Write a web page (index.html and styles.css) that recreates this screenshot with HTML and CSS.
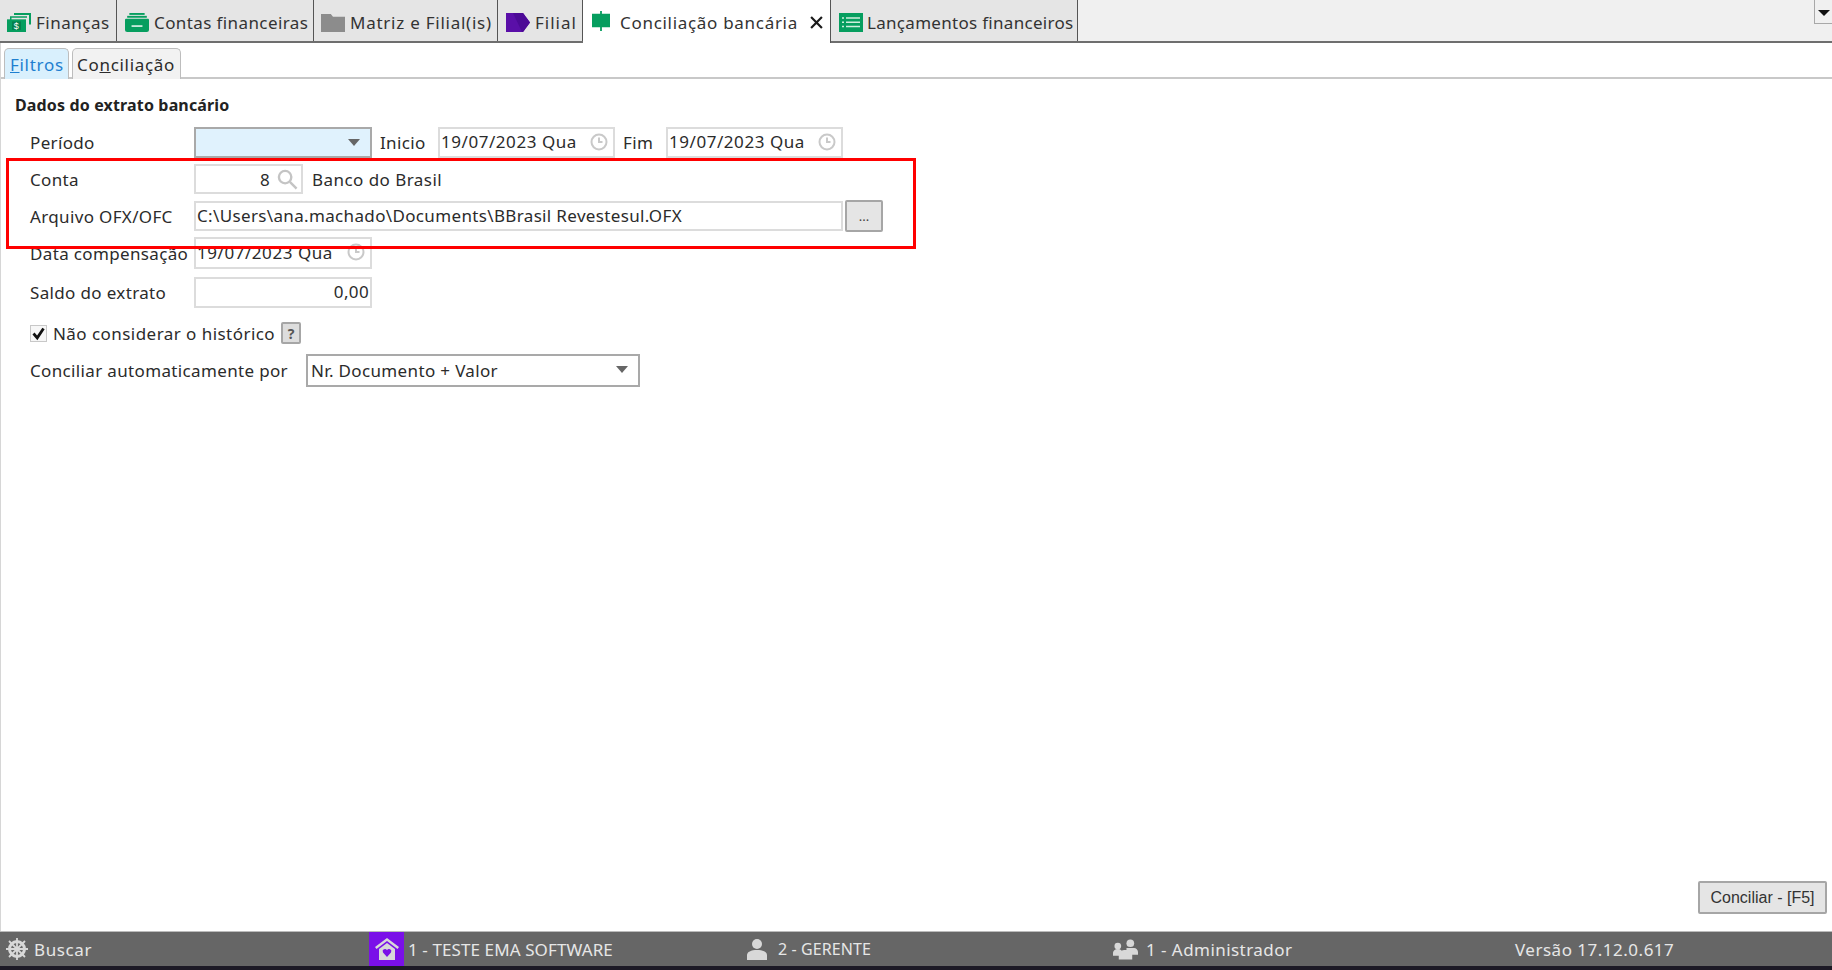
FILE: index.html
```html
<!DOCTYPE html>
<html lang="pt-BR">
<head>
    <meta charset="UTF-8">
    <title>Conciliação bancária</title>
    <link rel="stylesheet" href="styles.css">
</head>
<body>
<div class="app">
    <div class="tabs">
        <div class="tab tab-financas">
            <svg class="tab-icon" viewBox="0 0 24 18" preserveAspectRatio="none"><path class="green" d="M7 0h17v11h-2V2H7z"/><path class="green" d="M3 3h17v1.500H4.500V14H3z"/><rect class="green" x="0" y="6" width="19" height="12"/><rect class="green-dark" x="5" y="8" width="9" height="8"/><text x="9.500" y="15.500" class="dollar">$</text></svg>
            <span>Finanças</span>
        </div>
        <div class="tab tab-contas">
            <svg class="tab-icon" viewBox="0 0 22 20" preserveAspectRatio="none"><path class="green" d="M4 0h14v2H4z"/><path class="green" d="M2 3h18v2H2z"/><path class="green" d="M1 6h20a1 1 0 0 1 1 1v11a2 2 0 0 1-2 2H2a2 2 0 0 1-2-2V7a1 1 0 0 1 1-1z"/><path d="M6 13h10v1.500H6z" fill="#fff"/></svg>
            <span>Contas financeiras</span>
        </div>
        <div class="tab tab-matriz">
            <svg class="tab-icon" viewBox="0 0 22 20" preserveAspectRatio="none"><path d="M0 1h9l2 3h11v16H0z" fill="#8c8c8c"/></svg>
            <span>Matriz e Filial(is)</span>
        </div>
        <div class="tab tab-filial">
            <svg class="tab-icon" viewBox="0 0 24 18" preserveAspectRatio="none"><path d="M0 0h17l7 9-7 9H0z" fill="#5a0fa8"/><path d="M7 0h10l7 9-7 9h-1z" fill="#4c0a96"/></svg>
            <span>Filial</span>
        </div>
        <div class="tab tab-active">
            <svg class="tab-icon icon-candle" viewBox="0 0 20 22"><path class="green" d="M9 0h2v3h9v15h-9v4H9v-4H0V3h9z"/></svg>
            <span class="tab-active-label">Conciliação bancária</span>
            <svg class="tab-close" viewBox="0 0 12 12"><path d="M1 1l10 10M11 1L1 11" stroke="#1a1a1a" stroke-width="2" fill="none"/></svg>
        </div>
        <div class="tab tab-lanc">
            <svg class="tab-icon" viewBox="0 0 24 18" preserveAspectRatio="none"><rect class="green" width="24" height="18"/><path d="M7 4h14v1.500H7zM7 8h14v1.500H7zM7 12h14v1.500H7zM3 4h2v1.500H3zM3 8h2v1.500H3zM3 12h2v1.500H3z" fill="#cfeedd"/></svg>
            <span>Lançamentos financeiros</span>
        </div>
        <button class="tabs-menu"><span class="caret-black"></span></button>
    </div>

    <div class="main">
        <div class="subtabs">
            <div class="subtab subtab-active"><u>F</u>iltros</div>
            <div class="subtab subtab-conc">Co<u>n</u>ciliação</div>
        </div>

        <div class="form">
            <h3 class="form-title">Dados do extrato bancário</h3>

            <div class="row row-periodo">
                <label class="lbl">Período</label>
                <div class="field select select-blue"><span class="caret"></span></div>
                <label class="lbl-inline lbl-inicio">Inicio</label>
                <div class="field date">19/07/2023 Qua
                    <svg class="clock" viewBox="0 0 18 18"><circle cx="9" cy="9" r="7.500"/><path d="M9 4.500V9h3.500"/></svg>
                </div>
                <label class="lbl-inline lbl-fim">Fim</label>
                <div class="field date">19/07/2023 Qua
                    <svg class="clock" viewBox="0 0 18 18"><circle cx="9" cy="9" r="7.500"/><path d="M9 4.500V9h3.500"/></svg>
                </div>
            </div>

            <div class="row row-conta">
                <label class="lbl">Conta</label>
                <div class="field conta">8
                    <svg class="search" viewBox="0 0 22 22"><circle cx="8.500" cy="8.500" r="6.500"/><path d="M13.500 13.500L20.500 20.500"/></svg>
                </div>
                <span class="conta-nome">Banco do Brasil</span>
            </div>

            <div class="row row-arquivo">
                <label class="lbl">Arquivo OFX/OFC</label>
                <div class="field arquivo">C:\Users\ana.machado\Documents\BBrasil Revestesul.OFX</div>
                <button class="btn btn-dots">...</button>
            </div>

            <div class="row row-data">
                <label class="lbl">Data compensação</label>
                <div class="field date date-wide">19/07/2023 Qua
                    <svg class="clock" viewBox="0 0 18 18"><circle cx="9" cy="9" r="7.500"/><path d="M9 4.500V9h3.500"/></svg>
                </div>
            </div>

            <div class="row row-saldo">
                <label class="lbl">Saldo do extrato</label>
                <div class="field saldo">0,00</div>
            </div>

            <div class="row row-check">
                <span class="check"><svg viewBox="0 0 12 12"><path d="M2 6l3 3.500L10 2" stroke="#111" stroke-width="2.200" fill="none"/></svg></span>
                <span class="check-label">Não considerar o histórico</span>
                <button class="btn btn-help">?</button>
            </div>

            <div class="row row-auto">
                <label class="lbl lbl-auto">Conciliar automaticamente por</label>
                <div class="field select select-auto">Nr. Documento + Valor<span class="caret"></span></div>
            </div>
        </div>

        <div class="actions">
            <button class="btn btn-conciliar">Conciliar - [F5]</button>
        </div>

        <div class="highlight"></div>
    </div>

    <div class="status">
        <div class="status-item status-buscar">
            <svg class="status-icon" viewBox="0 0 22 22"><g fill="none" stroke="#d8d8d8"><circle cx="11" cy="11" r="7.500" stroke-width="3"/><path d="M11 0v22M0 11h22M3 3l16 16M19 3L3 19" stroke-width="1.800"/></g></svg>
            <span>Buscar</span>
        </div>
        <div class="status-empresa">
            <span class="home-box">
                <svg viewBox="0 0 24 24"><path d="M12 1L0 10l1.500 2L12 4l10.500 8 1.500-2z" fill="#d8d8d8"/><path d="M4 12l8-6 8 6v11H4z" fill="#d8d8d8"/><path d="M12 20l-4-4.500a2.300 2.300 0 0 1 4-2.300 2.300 2.300 0 0 1 4 2.300z" fill="#7a10e8"/></svg>
            </span>
            <span class="status-text">1 - TESTE EMA SOFTWARE</span>
        </div>
        <div class="status-item status-gerente">
            <svg class="status-icon" viewBox="0 0 22 22"><circle cx="11" cy="6" r="5" fill="#d8d8d8"/><path d="M1 22v-5c0-3 4-5 10-5s10 2 10 5v5z" fill="#d8d8d8"/></svg>
            <span class="status-text">2 - GERENTE</span>
        </div>
        <div class="status-item status-admin">
            <svg class="status-icon icon-admin" viewBox="0 0 26 22"><circle cx="18" cy="5" r="4" fill="#d8d8d8"/><circle cx="5" cy="8" r="3.500" fill="#d8d8d8"/><path d="M0 18v-3c0-2 2-4 5-4s5 2 5 4v3zM14 10h8c2 0 4 2 4 4v3h-12z" fill="#d8d8d8"/><path d="M6 22v-5c0-3 3-5 7-5s7 2 7 5v5z" fill="#d8d8d8"/></svg>
            <span class="status-text">1 - Administrador</span>
        </div>
        <div class="status-versao">Versão 17.12.0.617</div>
    </div>
    <div class="taskbar"></div>
</div>
</body>
</html>
```
FILE: styles.css
```css
* {
    box-sizing: border-box;
}
html, body {
    margin: 0;
    height: 100%;
    overflow: hidden;
}
body {
    font-family: 'Noto Sans', 'Open Sans', sans-serif;
    font-size: 17px;
    letter-spacing: 0.35px;
    color: #2b2b2b;
    background-color: #fff;
}
.app {
    height: 970px;
    display: flex;
    flex-direction: column;
}

/* top tabs */
.tabs {
    height: 43px;
    flex: none;
    display: flex;
    background-color: #f0f0f0;
    border-bottom: 2px solid #6e6e6e;
    position: relative;
}
.tab {
    height: 41px;
    padding-top: 4px;
    display: flex;
    align-items: center;
    gap: 5px;
    background-color: #e5e5e5;
    border-right: 1px solid #555;
    white-space: nowrap;
    color: #333;
}
.tab-financas { width: 117px; padding-left: 7px; letter-spacing: 0.5px; }
.tab-contas { width: 197px; padding-left: 8px; letter-spacing: 0.4px; }
.tab-matriz { width: 184px; padding-left: 7px; letter-spacing: 0.75px; }
.tab-filial { width: 85px; padding-left: 8px; letter-spacing: 1px; }
.tab-active {
    width: 248px;
    height: 43px;
    padding-left: 9px;
    padding-top: 2px;
    background-color: #fff;
    border-right: 1px solid #555;
    gap: 10px;
    letter-spacing: 0.7px;
}
.tab-lanc { width: 247px; padding-left: 8px; gap: 4px; letter-spacing: 0.3px; }
.tab-icon {
    width: 24px;
    height: 19px;
    flex: none;
}
.icon-candle {
    width: 18px;
    height: 20px;
    margin-top: -4px;
}
.tab-close {
    width: 13px;
    height: 13px;
    margin-left: 2px;
}
.green {
    fill: #069e5f;
}
.green-dark {
    fill: #05804d;
}
.dollar {
    fill: #fff;
    font-size: 9px;
    text-anchor: middle;
    font-family: 'Liberation Sans', sans-serif;
}
.tabs-menu {
    position: absolute;
    right: 0;
    top: 0;
    width: 18px;
    height: 24px;
    padding: 0;
    background-color: #f0f0f0;
    border: 1px solid #a8a8a8;
    border-top: none;
    border-right: none;
}
.caret-black {
    display: block;
    margin: 2px auto 0;
    width: 0;
    height: 0;
    border-left: 6px solid transparent;
    border-right: 6px solid transparent;
    border-top: 6px solid #111;
}

/* main area */
.main {
    flex: 1;
    display: flex;
    flex-direction: column;
    border-left: 1px solid #d6d6d6;
    position: relative;
}
.subtabs {
    height: 36px;
    padding: 5px 0 0 3px;
    display: flex;
    gap: 3px;
    border-bottom: 2px solid #c8c8c8;
}
.subtab {
    height: 31px;
    padding: 4px 0 0 5px;
    border: 1px solid #bdbdbd;
    border-bottom: none;
    border-radius: 5px 5px 0 0;
    background-color: #f2f2f2;
    line-height: 24px;
    color: #2b2b2b;
    white-space: nowrap;
    letter-spacing: 0.7px;
}
.subtab-active {
    width: 65px;
    background-color: #d9f0fd;
    color: #1f7fd0;
}
.subtab-conc {
    width: 109px;
    padding-left: 4px;
}
.form {
    padding: 16px 0 0 14px;
}
.form-title {
    margin: 0 0 12px;
    height: 20px;
    font-size: 16px;
    letter-spacing: 0.15px;
    line-height: 20px;
    font-weight: 700;
    color: #222;
}
.row {
    display: flex;
    align-items: center;
    margin-left: 15px;
    white-space: nowrap;
}
.lbl {
    width: 164px;
    flex: none;
}
.field {
    height: 100%;
    display: flex;
    align-items: center;
    background-color: #fff;
    border: 2px solid #dcdcdc;
    padding: 0 1px;
    position: relative;
}
.row-periodo { height: 31px; margin-bottom: 6px; }
.row-conta { height: 30px; margin-bottom: 7px; }
.row-arquivo { height: 30px; margin-bottom: 6px; }
.row-data { height: 32px; margin-bottom: 8px; }
.row-saldo { height: 31px; margin-bottom: 14px; }
.row-check { height: 22px; margin-bottom: 10px; }
.row-auto { height: 33px; }

.select {
    border-color: #a9a9a9;
}
.select-blue {
    width: 178px;
    background-color: #e0f2fd;
}
.select-auto {
    width: 334px;
    padding-left: 3px;
}
.caret {
    position: absolute;
    right: 10px;
    top: 10px;
    width: 0;
    height: 0;
    border-left: 6px solid transparent;
    border-right: 6px solid transparent;
    border-top: 7px solid #666;
}
.lbl-inline {
    flex: none;
}
.lbl-inicio {
    margin-left: 8px;
    width: 58px;
}
.lbl-fim {
    margin-left: 8px;
    width: 43px;
}
.date {
    width: 177px;
    padding-bottom: 2px;
    letter-spacing: 0.55px;
}
.date-wide {
    width: 178px;
}
.clock {
    position: absolute;
    right: 5px;
    top: 4px;
    width: 18px;
    height: 18px;
    fill: none;
    stroke: #c9c9c9;
    stroke-width: 2;
}
.conta {
    width: 109px;
    justify-content: flex-end;
    padding-right: 31px;
}
.search {
    position: absolute;
    right: 3px;
    top: 3px;
    width: 21px;
    height: 21px;
    fill: none;
    stroke: #c4c4c4;
    stroke-width: 2.500;
}
.conta-nome {
    margin-left: 9px;
    letter-spacing: 0.45px;
}
.arquivo {
    width: 649px;
    padding-bottom: 2px;
}
.btn {
    font-family: inherit;
    color: #444;
    background-color: #e5e5e5;
    border: 2px solid #a6a6a6;
    border-radius: 2px;
    padding: 0;
}
.btn-dots {
    width: 38px;
    height: 32px;
    margin-left: 2px;
    font-size: 13px;
    line-height: 24px;
}
.saldo {
    width: 178px;
    justify-content: flex-end;
    padding-bottom: 2px;
}
.check {
    width: 17px;
    height: 17px;
    flex: none;
    border: 1px solid #c8c8c8;
    background-color: #f7f7f7;
    display: flex;
}
.check svg {
    width: 15px;
    height: 15px;
}
.check-label {
    margin-left: 6px;
    letter-spacing: 0.45px;
}
.btn-help {
    width: 20px;
    height: 22px;
    margin-left: 6px;
    font-size: 14px;
    font-weight: 700;
    color: #555;
    background-color: #ddd;
}
.lbl-auto {
    width: 276px;
}
.actions {
    margin-top: auto;
    padding: 0 5px 17px 0;
    display: flex;
    justify-content: flex-end;
}
.btn-conciliar {
    width: 129px;
    height: 33px;
    font-family: 'Liberation Sans', sans-serif;
    font-size: 16px;
    color: #333;
}
.highlight {
    position: absolute;
    left: 5px;
    top: 115px;
    width: 910px;
    height: 91px;
    border: 3px solid #f00;
}

/* status bar */
.status {
    height: 35px;
    flex: none;
    display: flex;
    align-items: center;
    background-color: #666;
    border-top: 1px solid #bbb;
    color: #e6e6e6;
    font-size: 17px;
    position: relative;
}
.status-item {
    display: flex;
    align-items: center;
    gap: 6px;
}
.status-icon {
    width: 22px;
    height: 22px;
    flex: none;
}
.icon-admin {
    width: 25px;
}
.status-buscar { width: 369px; padding-left: 6px; letter-spacing: 0.6px; }
.status-empresa {
    width: 375px;
    height: 100%;
    display: flex;
    align-items: center;
    gap: 4px;
    letter-spacing: 0.1px;
}
.home-box {
    width: 35px;
    height: 100%;
    background-color: #7a10e8;
    display: flex;
    align-items: center;
    justify-content: center;
}
.home-box svg {
    width: 24px;
    height: 24px;
}
.status-gerente { width: 369px; padding-left: 2px; gap: 10px; font-size: 16px; letter-spacing: 0.1px; }
.status-admin { width: 402px; gap: 8px; letter-spacing: 0.45px; }
.status-versao { letter-spacing: 0.5px; }
.taskbar {
    height: 4px;
    flex: none;
    background-color: #1d1a26;
}
```
